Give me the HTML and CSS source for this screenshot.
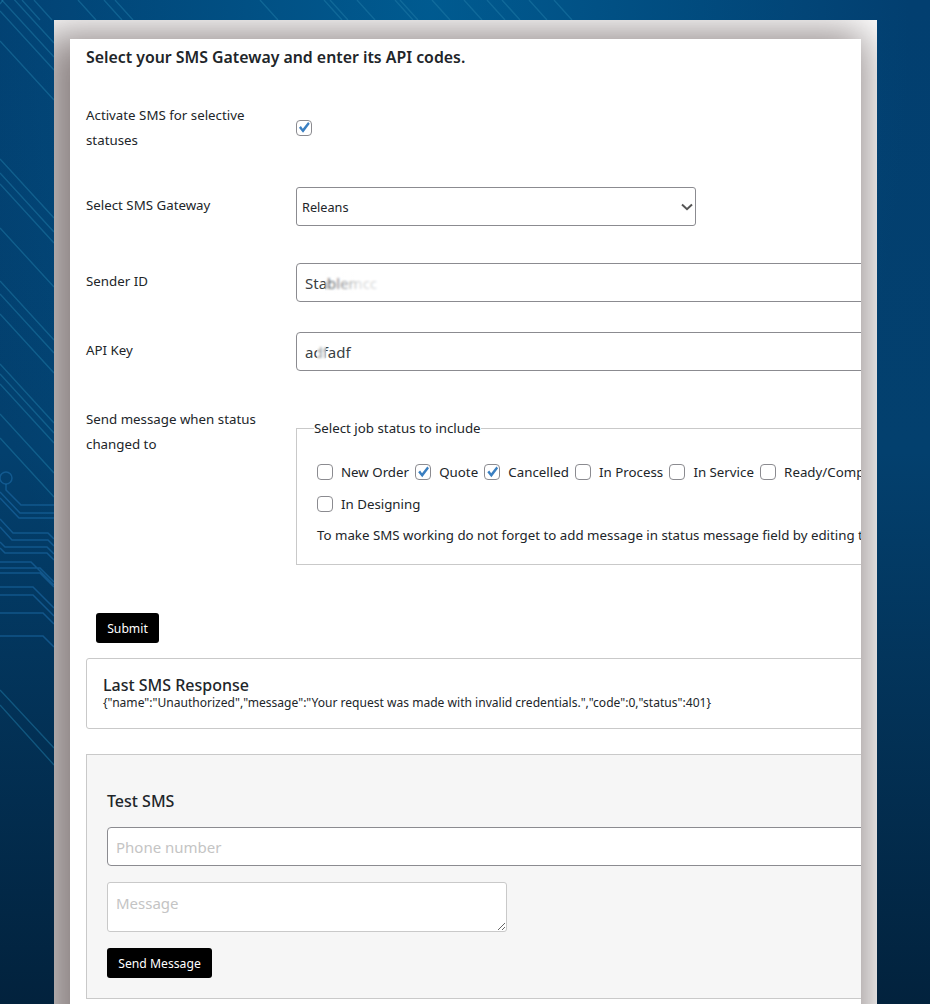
FILE: index.html
```html
<!DOCTYPE html>
<html lang="en">
<head>
<meta charset="utf-8">
<title>SMS Gateway</title>
<link rel="stylesheet" href="styles.css">
</head>
<body>
<svg class="bg-lines" width="930" height="1004" viewBox="0 0 930 1004" fill="none">
  <g class="trace">
    <path d="M0 -16 54 43M0 -2 54 57M0 11 54 70M0 41 54 100M0 159 54 218M0 173 54 232M0 184 54 243M0 228 54 287M0 281 54 340M0 294 54 353M0 314 54 373M0 364 54 423M0 374 54 433M0 384 54 443"/>
    <path d="M0 414 54 473M0 438 54 497"/>
    <path d="M104 0 122 20M115 0 133 20M260 0 278 20M324 0 342 20M330 0 348 20M357 0 375 20M395 0 413 20M400 0 418 20M432 0 450 20M464 0 482 20M487 0 505 20M502 0 520 20M529 0 547 20M554 0 572 20"/>
    <path d="M0 4 3 0M22 0 40 20M34 0 52 20M78 0 96 20"/>
    <path d="M0 690 54 748M0 705 54 765"/>
  </g>
  <g class="circuit">
    <circle cx="6" cy="478" r="6"/>
    <path d="M6 484V490L21 505H54"/>
    <path d="M0 492 20 513H54M0 498 19 518H54"/>
    <path d="M0 519 13 533H48L54 539M0 527 12 540H48L54 546M0 542 5 547H47L54 554M0 548 5 553H47L54 560"/>
    <path d="M0 562H31L54 585M0 568H40L54 582M0 573H40L54 587M0 587H33L54 608M0 595H33L54 616M0 613H43L54 624M0 636H43L54 647"/>
  </g>
</svg>
<main class="panel">
  <div class="card">
    <div class="content">
      <h2 class="title">Select your SMS Gateway and enter its API codes.</h2>

      <div class="row row-activate">
        <label class="label">Activate SMS for selective statuses</label>
        <div class="control-center"><input class="check" type="checkbox" checked></div>
      </div>

      <div class="row row-select">
        <label class="label label-inset">Select SMS Gateway</label>
        <div class="select-wrap">
          <select class="select"><option>Releans</option></select>
          <svg class="chevron" width="12" height="8" viewBox="0 0 12 8" fill="none"><path d="M1 1.5 6 6.2 11 1.5"/></svg>
        </div>
      </div>

      <div class="row row-sender">
        <label class="label label-inset">Sender ID</label>
        <div class="field-wrap">
          <input class="input" type="text" value="Stablemcc">
          <span class="smudge smudge-sender"></span>
        </div>
      </div>

      <div class="row row-key">
        <label class="label label-inset">API Key</label>
        <div class="field-wrap">
          <input class="input" type="text" value="adfadf">
          <span class="smudge smudge-key"></span>
        </div>
      </div>

      <div class="row row-status">
        <label class="label">Send message when status changed to</label>
        <fieldset class="statuses">
          <legend class="legend">Select job status to include</legend>
          <div class="options">
            <label class="option"><input class="check" type="checkbox"><span>New Order</span></label>
            <label class="option"><input class="check" type="checkbox" checked><span>Quote</span></label>
            <label class="option"><input class="check" type="checkbox" checked><span>Cancelled</span></label>
            <label class="option"><input class="check" type="checkbox"><span>In Process</span></label>
            <label class="option"><input class="check" type="checkbox"><span>In Service</span></label>
            <label class="option"><input class="check" type="checkbox"><span>Ready/Completed</span></label>
          </div>
          <div class="options options-second">
            <label class="option"><input class="check" type="checkbox"><span>In Designing</span></label>
          </div>
          <p class="note">To make SMS working do not forget to add message in status message field by editing the status</p>
        </fieldset>
      </div>

      <button class="btn btn-submit" type="button">Submit</button>

      <section class="response">
        <h3 class="box-title">Last SMS Response</h3>
        <div class="json">{"name":"Unauthorized","message":"Your request was made with invalid credentials.","code":0,"status":401}</div>
      </section>

      <section class="test">
        <h3 class="box-title test-title">Test SMS</h3>
        <input class="input input-phone" type="text" placeholder="Phone number">
        <textarea class="textarea" placeholder="Message"></textarea>
        <button class="btn btn-send" type="button">Send Message</button>
      </section>
    </div>
  </div>
</main>
</body>
</html>
```
FILE: styles.css
```css
* { box-sizing: border-box; }
html, body { margin: 0; height: 100%; }
body {
  position: relative;
  height: 1004px;
  overflow: hidden;
  font-family: "Noto Sans", "Liberation Sans", sans-serif;
  font-size: 13.3px;
  color: #212529;
  background:
    radial-gradient(ellipse 480px 900px at 430px 0, rgba(0,92,146,.95) 0%, rgba(0,92,146,0) 100%),
    linear-gradient(180deg, #023f70 0%, #03406e 45%, #02223d 100%);
}
.bg-lines { position: absolute; left: 0; top: 0; }
.trace path { stroke: #1f7ba8; stroke-opacity: .5; stroke-width: 1.4; }
.circuit path, .circuit circle { stroke: #1c6aa6; stroke-opacity: .6; stroke-width: 1.5; }

.panel {
  position: relative;
  width: 823px;
  height: 1004px;
  margin: 20px 0 0 54px;
  padding: 19px 16px 0;
  background: #fff;
  overflow: hidden;
}
.panel::before {
  content: "";
  position: absolute;
  left: 16px; right: 16px; top: 19px; bottom: -60px;
  box-shadow: -12px 10px 40px 16px rgba(60,45,45,.58);
}
.card {
  position: relative;
  height: 100%;
  background: #fff;
  overflow: hidden;
}
.content { width: 1100px; padding-left: 16px; }

.title {
  margin: 0;
  padding-top: 6px;
  font-size: 15.85px;
  line-height: 24px;
  font-weight: 600;
}
.row { display: grid; grid-template-columns: 210px 1fr; }
.label { display: block; line-height: 25.2px; padding-top: 1px; padding-right: 30px; }
.label-inset { padding-top: 6px; }
.row-activate { margin-top: 33px; height: 51px; }
.control-center { display: flex; align-items: center; height: 51px; }
.row-select { margin-top: 34px; }
.row-sender { margin-top: 37px; }
.row-key { margin-top: 30px; }
.row-status { margin-top: 35px; }

.select-wrap { position: relative; width: 400px; height: 39px; }
.select {
  appearance: none;
  width: 100%;
  height: 39px;
  padding: 1px 5px 0;
  font: inherit;
  font-size: 12.7px;
  color: #212529;
  background: #fff;
  border: 1px solid #8b8b90;
  border-radius: 3px;
}
.chevron { position: absolute; right: 3px; top: 16px; pointer-events: none; }
.chevron path { stroke: #555; stroke-width: 2; }

.field-wrap { position: relative; width: 844px; height: 39px; }
.input {
  display: block;
  width: 844px;
  height: 39px;
  padding: 0 8px;
  font: inherit;
  font-size: 15px;
  color: #3a3f44;
  background: #fff;
  border: 1px solid #8b8b90;
  border-radius: 4px;
}
.input::placeholder, .textarea::placeholder { color: #c4c4c4; opacity: 1; }
.smudge { position: absolute; pointer-events: none; }
.smudge-sender {
  left: 29px; top: 9px; width: 58px; height: 22px;
  backdrop-filter: blur(1.2px);
  background: linear-gradient(90deg, rgba(255,255,255,.1), rgba(255,255,255,.8) 60%);
}
.smudge-key {
  left: 21px; top: 9px; width: 9px; height: 22px;
  backdrop-filter: blur(1.2px);
  background: rgba(255,255,255,.45);
}

.statuses {
  position: relative;
  display: block;
  width: 800px;
  min-width: 0;
  height: 146px;
  margin: 13px 0 0;
  padding: 0 0 0 20px;
  border: 1px solid #c9c9c9;
  border-right: 0;
}
.legend {
  padding: 0;
  margin-left: -3px;
  line-height: 18px;
}
.options { display: flex; padding-top: 18px; height: 52px; align-items: center; white-space: nowrap; }
.options-second { padding-top: 0; height: 20px; margin-top: 5px; }
.option { display: flex; align-items: center; margin-right: 6.2px; }
.option span { margin-left: 8px; }
.note { margin: 0; margin-top: 11px; line-height: 20px; white-space: nowrap; }

.check {
  appearance: none;
  display: block;
  flex: none;
  position: relative;
  width: 16px;
  height: 16px;
  margin: 0;
  background: #fff;
  border: 1px solid #8b8b90;
  border-radius: 4px;
}
.check:checked::before {
  content: "";
  position: absolute;
  inset: 1px;
  background: #3a7fc1;
  clip-path: polygon(8% 52%, 24% 38%, 40% 60%, 84% 4%, 98% 18%, 42% 94%);
}

.btn {
  display: block;
  border: 0;
  border-radius: 3px;
  background: #000;
  color: #fff;
  font: inherit;
  font-size: 12.2px;
  height: 30px;
  padding: 0;
}
.btn-submit { width: 63px; margin: 48px 0 0 10px; }

.response {
  width: 900px;
  height: 71px;
  margin-top: 15px;
  padding: 16px 16px 0;
  border: 1px solid #c9c9c9;
  border-radius: 3px;
}
.box-title { margin: 0; font-size: 16px; line-height: 20px; font-weight: 500; }
.json { font-size: 12.07px; line-height: 15px; white-space: nowrap; }

.test {
  width: 900px;
  height: 245px;
  margin-top: 25px;
  padding: 36px 20px 0;
  background: #f6f6f6;
  border: 1px solid #c9c9c9;
}
.input-phone { margin-top: 16px; width: 860px; }
.textarea {
  display: block;
  width: 400px;
  height: 50px;
  margin-top: 16px;
  padding: 10px 8px;
  font: inherit;
  font-size: 15px;
  background: #fff;
  border: 1px solid #c9c9c9;
  border-radius: 3px;
}
.btn-send { width: 105px; margin-top: 16px; }
```
